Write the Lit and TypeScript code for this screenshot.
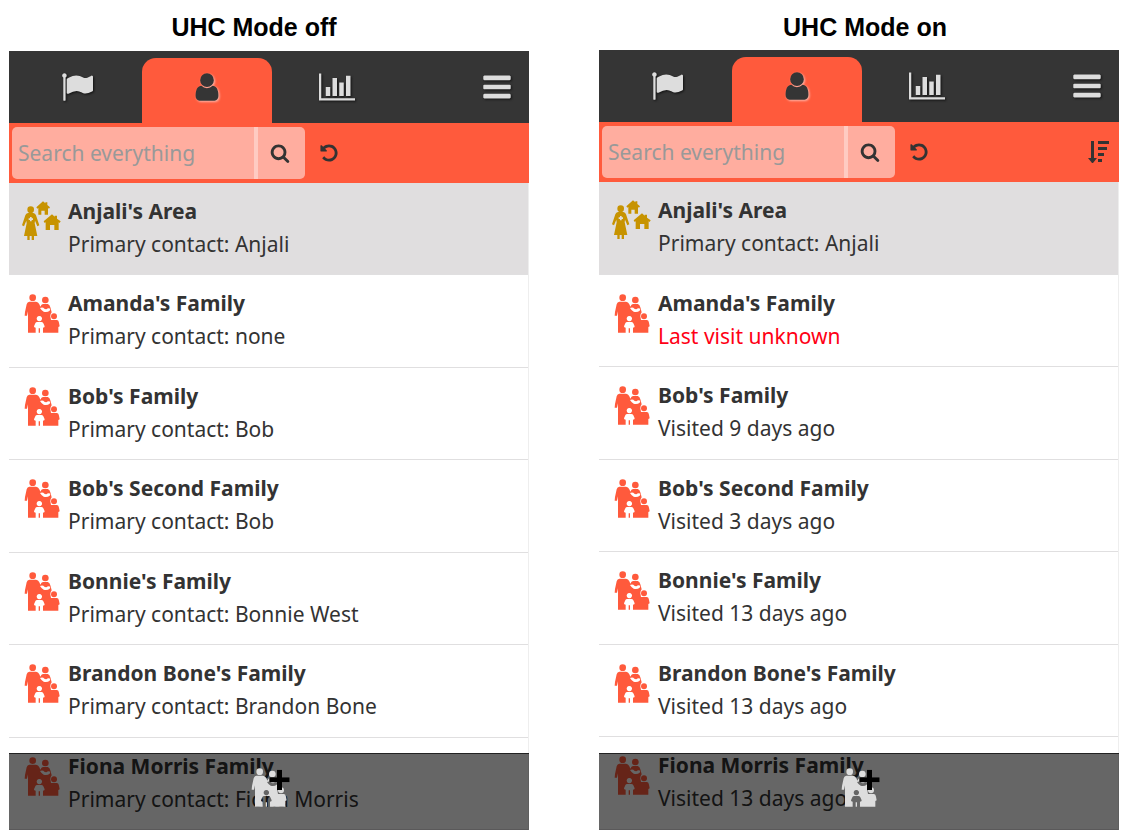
import { LitElement, html, css, svg, nothing } from "lit";
import { customElement, property } from "lit/decorators.js";
import { classMap } from "lit/directives/class-map.js";

interface Contact {
  name: string;
  detail: string;
  kind: "area" | "family";
  alert?: boolean;
}

const FLAG =
  "M320 256q0 72-64 110v1266q0 13-9.5 22.5t-22.5 9.5h-64q-13 0-22.5-9.5t-9.5-22.5v-1266q-64-38-64-110 0-53 37.5-90.5t90.5-37.5 90.5 37.5 37.5 90.5zm1472 64v763q0 25-12.5 38.5t-39.5 27.5q-215 116-369 116-61 0-123.5-22t-108.5-48-115.5-48-142.5-22q-192 0-464 146-17 9-33 9-26 0-45-19t-19-45v-742q0-32 31-55 21-14 79-43 236-120 421-120 107 0 200 29t219 88q38 19 88 19 54 0 117.5-21t110-47 88-47 54.5-21q26 0 45 19t19 45z";
const USER =
  "M1536 1399q0 109-62.5 187t-150.5 78h-854q-88 0-150.5-78t-62.5-187q0-85 8.5-160.5t31.5-152 58.5-131 94-89 134.5-34.5q131 128 313 128t313-128q76 0 134.5 34.5t94 89 58.5 131 31.5 152 8.5 160.5zm-256-887q0 159-112.5 271.5t-271.5 112.5-271.5-112.5-112.5-271.5 112.5-271.5 271.5-112.5 271.5 112.5 112.5 271.5z";
const CHART =
  "M640 896v512h-256v-512h256zm384-512v1024h-256v-1024h256zm1024 1152v128h-2048v-1536h128v1408h1920zm-640-896v768h-256v-768h256zm384-384v1152h-256v-1152h256z";
const BARS =
  "M1664 1344v128q0 26-19 45t-45 19h-1408q-26 0-45-19t-19-45v-128q0-26 19-45t45-19h1408q26 0 45 19t19 45zm0-512v128q0 26-19 45t-45 19h-1408q-26 0-45-19t-19-45v-128q0-26 19-45t45-19h1408q26 0 45 19t19 45zm0-512v128q0 26-19 45t-45 19h-1408q-26 0-45-19t-19-45v-128q0-26 19-45t45-19h1408q26 0 45 19t19 45z";
const SEARCH =
  "M1216 832q0-185-131.5-316.5t-316.5-131.5-316.5 131.5-131.5 316.5 131.5 316.5 316.5 131.5 316.5-131.5 131.5-316.5zm512 832q0 52-38 90t-90 38q-54 0-90-38l-343-342q-179 124-399 124-143 0-273.5-55.5t-225-150-150-225-55.5-273.5 55.5-273.5 150-225 225-150 273.5-55.5 273.5 55.5 225 150 150 225 55.5 273.5q0 220-124 399l343 343q37 37 37 90z";
const UNDO =
  "M1664 896q0 156-61 298t-164 245-245 164-298 61q-172 0-327-72.5t-264-204.5q-7-10-6.5-22.5t8.5-20.5l137-138q10-9 25-9 16 2 23 12 73 95 179 147t225 52q104 0 198.5-40.5t163.5-109.5 109.5-163.5 40.5-198.5-40.5-198.5-109.5-163.5-163.5-109.5-198.5-40.5q-98 0-188 35.5t-160 101.5l137 138q31 30 14 69-17 40-59 40h-448q-26 0-45-19t-19-45v-448q0-42 40-59 39-17 69 14l130 129q107-101 244.5-156.5t284.5-55.5q156 0 298 61t245 164 164 245 61 298z";

const glyph = (path: string, cls: string, box = "0 0 1792 1792") =>
  html`<svg class=${cls} viewBox=${box} aria-hidden="true"><path fill="currentColor" d=${path}></path></svg>`;

const familyShapes = svg`
  <g fill="currentColor">
    <circle cx="53" cy="41" r="10"></circle>
    <circle cx="91" cy="48" r="10"></circle>
    <circle cx="117" cy="97" r="9"></circle>
    <path fill-rule="evenodd" d="M43 53H63Q70 53 73 61L76 68Q79 61 84 60H98Q104 61 106 70L110 85Q106 90 106 97L108 108H126Q131 109 132 116L134 127L130 129V146H84V131L88 130L89 127L85 118Q83 114 79 114H67Q62 114 61 118L57 127L58 130L62 131V146H39V82L36 95L29 95L30 84L35 61Q37 54 43 53ZM73 96a8 8 0 1 0 0.1 0ZM75 72Q79 79 86 83Q97 86 104 80Q108 75 103 73Q98 72 94 76Q89 76 85 71Q80 69 75 72Z"></path>
    <path d="M71 133h4v13h-4z"></path>
  </g>`;

const familyIcon = html`<svg class="family" viewBox="27 27 108 120" aria-hidden="true">${familyShapes}</svg>`;

const areaIcon = html`<svg class="area" viewBox="21 21 120 120" aria-hidden="true">
  <g fill="currentColor" fill-rule="evenodd">
    <circle cx="47" cy="47" r="10"></circle>
    <path d="M39 57H55Q61 58 63 64L73 94L67 97L60 80L59 88L67 126H57V138H50V126H44V138H37V126H27L35 88L34 80L27 97L21 94L31 64Q33 58 39 57ZM45 69V73H41V78H45V82H50V78H54V73H50V69Z"></path>
    <path d="M84 22L91 28V25H97V33L105 40L102 44L99 42V62H89V50H79V62H70V42L67 44L64 40Z"></path>
    <path d="M111 61L119 68V65H126V74L137 82L134 87L131 85V108H118V93H105V108H92V85L89 87L86 82Z"></path>
  </g>
</svg>`;

@customElement("contact-panel")
export class ContactPanel extends LitElement {
  @property() heading = "";
  @property({ type: Boolean }) sortable = false;
  @property({ attribute: false }) contacts: Contact[] = [];

  static styles = css`
    :host {
      display: flex;
      flex-direction: column;
      min-width: 0;
      color: #333;
      font-family: "Noto Sans", sans-serif;
      font-size: 21px;
    }
    svg {
      display: block;
      overflow: visible;
    }
    a {
      color: inherit;
      text-decoration: none;
    }
    button {
      display: grid;
      place-items: center;
      padding: 0;
      border: 0;
      background: none;
      color: inherit;
      cursor: pointer;
    }
    .heading {
      margin: 0;
      padding: 11px 30px 8px 0;
      color: #000;
      font: bold 25px/32px "Liberation Sans", sans-serif;
      text-align: center;
    }
    :host([sortable]) .heading {
      padding: 11px 0 7px 12px;
    }
    .frame {
      position: relative;
      flex: 1;
      display: flex;
      flex-direction: column;
    }
    .header {
      display: flex;
      justify-content: space-between;
      height: 72px;
      padding-left: 3px;
      background: #353535;
      color: #ddd;
    }
    .tabs {
      flex: 1;
      display: flex;
      align-items: end;
    }
    .tab {
      display: grid;
      justify-items: center;
      align-content: start;
      width: 130px;
      height: 65px;
      padding-top: 13px;
      box-sizing: border-box;
      border-radius: 14px 14px 0 0;
    }
    .tab.active {
      background: #ff5a3c;
      color: #353535;
    }
    .large {
      width: 32px;
      height: 32px;
      filter: drop-shadow(1px 1px 1px #111);
    }
    .active .large {
      filter: drop-shadow(1px 1px 1px #ffc0b4);
    }
    .wide {
      width: 36px;
    }
    .menu {
      width: 64px;
    }
    .toolbar {
      display: flex;
      align-items: center;
      gap: 14px;
      height: 60px;
      padding: 0 9px 0 3px;
      box-sizing: border-box;
      background: #ff5a3c;
    }
    .search {
      display: flex;
      width: 293px;
      height: 52px;
      border-radius: 5px;
      overflow: hidden;
      background: #ffad9f;
    }
    .field {
      flex: 1;
      min-width: 0;
      padding: 0 6px;
      border: 0;
      border-right: 4px solid #ffcbc2;
      background: none;
      color: #333;
      font: inherit;
      outline: 0;
    }
    .field::placeholder {
      color: #999;
      opacity: 1;
    }
    .go {
      width: 47px;
      padding-right: 4px;
    }
    .small {
      width: 20px;
      height: 20px;
    }
    .sort {
      margin-left: auto;
    }
    .sort-icon {
      width: 22px;
      height: 22px;
    }
    .list {
      flex: 1;
      display: grid;
      grid-auto-rows: 1fr;
      margin: 0;
      padding: 0;
      border-right: 1px solid #eee;
      list-style: none;
    }
    .row {
      border-bottom: 1px solid #e0dfe0;
    }
    .row.selected {
      background: #e0dedf;
    }
    .link {
      display: grid;
      grid-template-columns: 40px 1fr;
      column-gap: 6px;
      padding: 12px 13px;
    }
    .picture {
      display: grid;
      justify-content: center;
      align-content: start;
      padding-top: 6px;
      color: #ff5a3c;
    }
    .selected .picture {
      color: #c79300;
    }
    .family {
      width: 36px;
      height: 40px;
    }
    .area {
      width: 40px;
      height: 40px;
    }
    .text {
      min-width: 0;
      line-height: 33px;
    }
    .name {
      margin: 0;
      font-size: 21px;
      font-weight: 700;
    }
    .detail {
      margin: 0;
      line-height: 32px;
    }
    .detail.alert {
      color: #ff0015;
    }
    .actions {
      position: absolute;
      inset: auto 0 0 0;
      display: grid;
      justify-content: center;
      align-content: start;
      height: 77px;
      padding-top: 13px;
      box-sizing: border-box;
      border-top: 1px solid #222;
      background: rgb(0 0 0 / 60%);
      color: #ddd;
    }
    .plus {
      filter: drop-shadow(0 0 1px #ccc);
    }
  `;

  render() {
    return html`
      <h2 class="heading">${this.heading}</h2>
      <div class="frame">
        <header class="header">
          <nav class="tabs">
            <a class="tab" href="#tasks" aria-label="Tasks">${glyph(FLAG, "large")}</a>
            <a class="tab active" href="#contacts" aria-label="Contacts" aria-current="page">${glyph(USER, "large")}</a>
            <a class="tab" href="#reports" aria-label="Reports">${glyph(CHART, "large wide", "0 0 2048 1792")}</a>
          </nav>
          <button class="menu" type="button" aria-label="Menu">${glyph(BARS, "large")}</button>
        </header>
        <div class="toolbar">
          <form class="search" role="search" @submit=${(e: Event) => e.preventDefault()}>
            <input class="field" type="text" placeholder="Search everything" aria-label="Search everything" />
            <button class="go" aria-label="Search">${glyph(SEARCH, "small")}</button>
          </form>
          <button type="button" aria-label="Reset">${glyph(UNDO, "small")}</button>
          ${this.sortable
            ? html`<button class="sort" type="button" aria-label="Sort">
                <svg class="sort-icon" viewBox="0 0 22 22" aria-hidden="true">
                  <path
                    fill="currentColor"
                    d="M3 0h3v17h3L5 22H4L0 17h3zM10 0h11v3H10zM10 6h9v3h-9zM10 12h6v3h-6zM10 18h4v3h-4z"
                  ></path>
                </svg>
              </button>`
            : nothing}
        </div>
        <ul class="list">
          ${this.contacts.map(
            (c) => html`<li class=${classMap({ row: true, selected: c.kind === "area" })}>
              <a class="link" href="#contact">
                <span class="picture">${c.kind === "area" ? areaIcon : familyIcon}</span>
                <div class="text">
                  <h3 class="name">${c.name}</h3>
                  <p class=${classMap({ detail: true, alert: !!c.alert })}>${c.detail}</p>
                </div>
              </a>
            </li>`
          )}
        </ul>
        <div class="actions">
          <button type="button" aria-label="Add family">
            <svg class="family" viewBox="27 27 108 120" aria-hidden="true">
              ${familyShapes}
              <path class="plus" fill="#000" d="M105 35h15v23h23v15h-23v23h-15V73H82V58h23z"></path>
            </svg>
          </button>
        </div>
      </div>
    `;
  }
}

const area: Contact = { name: "Anjali's Area", detail: "Primary contact: Anjali", kind: "area" };

const modeOff: Contact[] = [
  area,
  { name: "Amanda's Family", detail: "Primary contact: none", kind: "family" },
  { name: "Bob's Family", detail: "Primary contact: Bob", kind: "family" },
  { name: "Bob's Second Family", detail: "Primary contact: Bob", kind: "family" },
  { name: "Bonnie's Family", detail: "Primary contact: Bonnie West", kind: "family" },
  { name: "Brandon Bone's Family", detail: "Primary contact: Brandon Bone", kind: "family" },
  { name: "Fiona Morris Family", detail: "Primary contact: Fiona Morris", kind: "family" },
];

const modeOn: Contact[] = [
  area,
  { name: "Amanda's Family", detail: "Last visit unknown", kind: "family", alert: true },
  { name: "Bob's Family", detail: "Visited 9 days ago", kind: "family" },
  { name: "Bob's Second Family", detail: "Visited 3 days ago", kind: "family" },
  { name: "Bonnie's Family", detail: "Visited 13 days ago", kind: "family" },
  { name: "Brandon Bone's Family", detail: "Visited 13 days ago", kind: "family" },
  { name: "Fiona Morris Family", detail: "Visited 13 days ago", kind: "family" },
];

@customElement("app-root")
export class AppRoot extends LitElement {
  static styles = css`
    :host {
      display: grid;
      grid-template-columns: 1fr 1fr;
      gap: 70px;
      min-height: 100vh;
      padding: 0 9px 5px;
      box-sizing: border-box;
      background: #fff;
    }
  `;

  render() {
    return html`
      <contact-panel heading="UHC Mode off" .contacts=${modeOff}></contact-panel>
      <contact-panel heading="UHC Mode on" sortable .contacts=${modeOn}></contact-panel>
    `;
  }
}
